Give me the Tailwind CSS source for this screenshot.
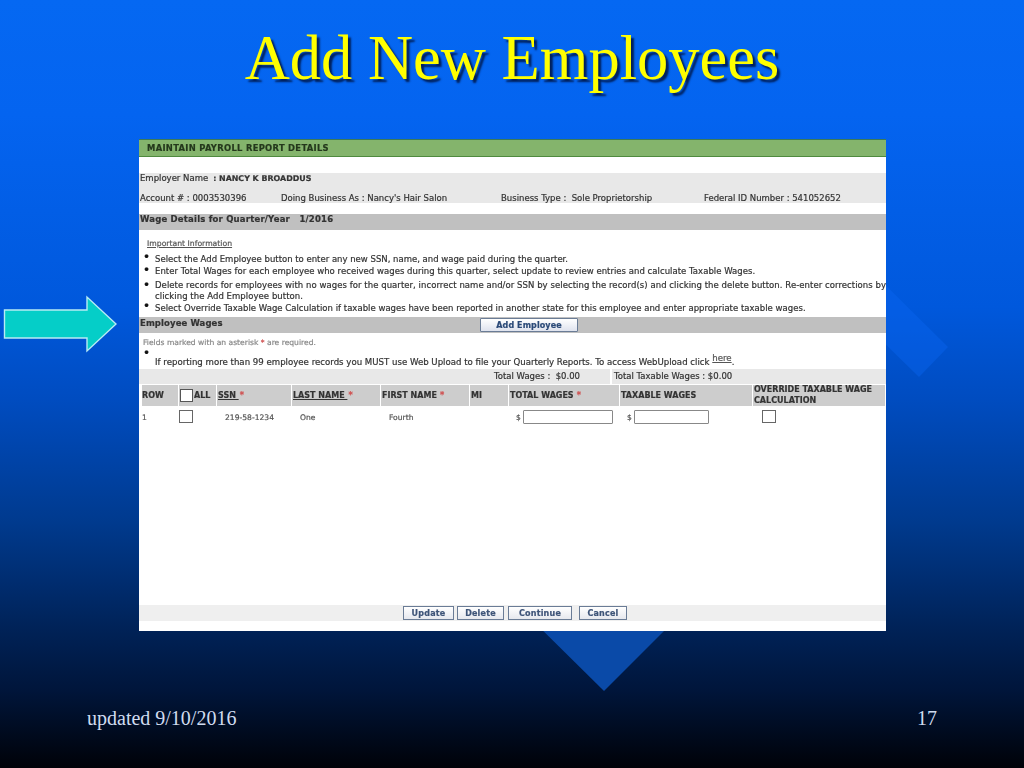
<!DOCTYPE html>
<html lang="en">
<head>
<meta charset="utf-8">
<title>Add New Employees</title>
<script src="https://cdn.jsdelivr.net/npm/@tailwindcss/browser@4"></script>
</head>
<body class="m-0">
<div class="relative w-[1024px] h-[768px] overflow-hidden bg-[linear-gradient(to_bottom,#0568f2_0%,#0464f0_15%,#0058dc_40%,#004cc0_52%,#003a8e_68%,#002257_82%,#00153a_90%,#000208_100%)]">
  <!-- background diamonds -->
  <svg class="absolute inset-0" width="1024" height="768" viewBox="0 0 1024 768">
    <polygon points="860,260 948,347 919,377 830,290" fill="#0a66f2" opacity="0.4"/>
    <polygon points="520,608 604,691 687,608" fill="#0a4aa8"/>
  </svg>

  <h1 class="absolute left-0 w-full top-[22px] text-center font-['Liberation_Serif',serif] text-[62.5px] leading-[72px] text-[#ffff00] [text-shadow:3px_3px_2px_#00205c]">Add New Employees</h1>

  <!-- arrow -->
  <svg class="absolute left-[3px] top-[295px]" width="114" height="58" viewBox="0 0 114 58">
    <polygon points="1.5,15 84,15 84,2 113,29 84,56 84,43 1.5,43" fill="#05cec8" stroke="#b8ecf4" stroke-width="1.4"/>
  </svg>

  <!-- screenshot of the payroll page -->
  <div class="absolute left-[139px] top-[139px] w-[747px] h-[492px] bg-white flex flex-col font-['DejaVu_Sans',sans-serif] text-[8.5px] text-[#333] [-webkit-text-stroke:0.2px] overflow-hidden blur-[0.3px]">
    <div class="h-[18px] shrink-0 bg-[#84b46c] border-t border-t-[#3d7a55] border-b border-b-[#4f8a3f] pl-[8px] flex items-center font-bold text-[8.4px] tracking-[0.3px] text-[#24381c]">MAINTAIN PAYROLL REPORT DETAILS</div>
    <div class="h-[16px] shrink-0"></div>
    <div class="h-[30px] shrink-0 bg-[#e8e8e8] flex flex-col">
      <div class="h-[11px] flex items-center gap-[5px] pl-[1px] whitespace-pre"><span>Employer Name</span><span class="font-bold text-[7.9px]">: NANCY K BROADDUS</span></div>
      <div class="relative mt-[9px] h-[11px] flex items-center whitespace-pre pl-[1px]">
        <span class="w-[141px]">Account # : 0003530396</span>
        <span class="w-[220px]">Doing Business As : Nancy's Hair Salon</span>
        <span class="w-[203px]">Business Type :  Sole Proprietorship</span>
        <span>Federal ID Number : 541052652</span>
      </div>
    </div>
    <div class="h-[11px] shrink-0"></div>
    <div class="h-[16px] shrink-0 bg-[#c0c0c0] pl-[1px] flex items-center font-bold tracking-[0.2px] whitespace-pre"><span class="-mt-[6px]">Wage Details for Quarter/Year   1/2016</span></div>

    <div class="h-[87px] shrink-0 relative whitespace-nowrap">
      <div class="pl-[8px] pt-[8px] leading-[11px] text-[7.7px] text-[#555]"><span class="underline">Important Information</span></div>
      <ul class="mt-[3px] flex flex-col pl-[4px]">
        <li class="flex h-[13px] gap-[8px]"><span class="text-[#111] text-[12px] leading-[10px] w-[4px]">•</span><span class="leading-[11px] mt-[2px]">Select the Add Employee button to enter any new SSN, name, and wage paid during the quarter.</span></li>
        <li class="flex h-[13px] gap-[8px]"><span class="text-[#111] text-[12px] leading-[10px] w-[4px]">•</span><span class="leading-[11px] mt-[1px] tracking-[0.03px]">Enter Total Wages for each employee who received wages during this quarter, select update to review entries and calculate Taxable Wages.</span></li>
        <li class="flex h-[23px] gap-[8px]"><span class="text-[#111] text-[12px] leading-[10px] mt-[2px] w-[4px]">•</span><span class="leading-[10.5px] mt-[2px] tracking-[0.055px]">Delete records for employees with no wages for the quarter, incorrect name and/or SSN by selecting the record(s) and clicking the delete button. Re-enter corrections by<br>clicking the Add Employee button.</span></li>
        <li class="flex h-[13px] gap-[8px]"><span class="text-[#111] text-[12px] leading-[10px] w-[4px]">•</span><span class="leading-[11px] mt-[2px] tracking-[0.02px]">Select Override Taxable Wage Calculation if taxable wages have been reported in another state for this employee and enter appropriate taxable wages.</span></li>
      </ul>
    </div>

    <div class="h-[16px] shrink-0 bg-[#c0c0c0] relative flex items-center pl-[1px] font-bold tracking-[0.1px]">
      <span class="-mt-[3px]">Employee Wages</span>
      <button class="absolute left-[341px] top-[1px] w-[98px] h-[14px] pt-[1px] bg-gradient-to-b from-white to-[#dfe3ee] border border-[#6a7c96] rounded-[1px] text-[#2b4a78] font-bold text-[8px] tracking-[0.1px] leading-none">Add Employee</button>
    </div>

    <div class="h-[36px] shrink-0 relative">
      <div class="pl-[4px] pt-[4px] leading-[11px] text-[#888] text-[7.6px]">Fields marked with an asterisk <span class="text-[#d05050]">*</span> are required.</div>
      <div class="absolute left-[4px] top-[15px] text-[#111] text-[12px] leading-[10px]">•</div>
      <div class="absolute left-[16px] top-[24px] text-[8.6px] leading-[11px] whitespace-nowrap">If reporting more than 99 employee records you MUST use Web Upload to file your Quarterly Reports. To access WebUpload click <span class="relative -top-[4px] underline text-[#555]">here</span>.</div>
    </div>

    <div class="h-[15px] shrink-0 bg-[#e8e8e8] flex items-center whitespace-pre relative">
      <span class="ml-[355px] w-[116px]">Total Wages :  $0.00</span>
      <span class="w-[2px] h-full bg-white"></span>
      <span class="ml-[2px]">Total Taxable Wages : $0.00</span>
    </div>

    <div class="h-[1px] shrink-0"></div>
    <div class="h-[21px] shrink-0 flex gap-[1px] pl-[3px] text-[#333] font-bold text-[8px] bg-white">
      <div class="w-[36px] bg-[#cdcdcd] flex items-center pt-[1px]">ROW</div>
      <div class="w-[37px] bg-[#cdcdcd] flex items-center pl-[1px]"><span class="w-[13px] h-[13px] border border-[#555] bg-white mr-[1px] shrink-0"></span><span class="pt-[1px]">ALL</span></div>
      <div class="w-[74px] bg-[#cdcdcd] flex items-center pl-[1px] pt-[1px] whitespace-pre"><span class="underline">SSN </span><span class="text-[#d05050] ml-[1px]">*</span></div>
      <div class="w-[88px] bg-[#cdcdcd] flex items-center pl-[1px] pt-[1px] whitespace-pre"><span class="underline">LAST NAME </span><span class="text-[#d05050] ml-[1px]">*</span></div>
      <div class="w-[88px] bg-[#cdcdcd] flex items-center pl-[1px] pt-[1px]">FIRST NAME <span class="text-[#d05050] ml-[3px]">*</span></div>
      <div class="w-[38px] bg-[#cdcdcd] flex items-center pl-[1px] pt-[1px]">MI</div>
      <div class="w-[110px] bg-[#cdcdcd] flex items-center pl-[1px] pt-[1px]">TOTAL WAGES <span class="text-[#d05050] ml-[3px]">*</span></div>
      <div class="w-[132px] bg-[#cdcdcd] flex items-center pl-[1px] pt-[1px]">TAXABLE WAGES</div>
      <div class="w-[132px] bg-[#cdcdcd] flex items-center pl-[1px] leading-[10.5px]">OVERRIDE TAXABLE WAGE<br>CALCULATION</div>
    </div>

    <div class="h-[22px] shrink-0 relative text-[7.6px] text-[#555]">
      <span class="absolute left-[3px] top-[6px] leading-[11px]">1</span>
      <span class="absolute left-[40px] top-[4px] w-[14px] h-[13px] border border-[#666]"></span>
      <span class="absolute left-[86px] top-[6px] leading-[11px]">219-58-1234</span>
      <span class="absolute left-[161px] top-[6px] leading-[11px]">One</span>
      <span class="absolute left-[250px] top-[6px] leading-[11px]">Fourth</span>
      <span class="absolute left-[377px] top-[6px] leading-[11px]">$</span>
      <span class="absolute left-[384px] top-[4px] w-[90px] h-[14px] border border-[#888] rounded-[1px]"></span>
      <span class="absolute left-[488px] top-[6px] leading-[11px]">$</span>
      <span class="absolute left-[495px] top-[4px] w-[75px] h-[14px] border border-[#888] rounded-[1px]"></span>
      <span class="absolute left-[623px] top-[4px] w-[14px] h-[13px] border border-[#666]"></span>
    </div>

    <div class="flex-1"></div>

    <div class="h-[16px] shrink-0 bg-[#efefef] flex items-center pl-[264px] font-bold text-[8px] tracking-[0.2px] text-[#3e5478]">
      <button class="w-[51px] h-[14px] pt-[1px] bg-gradient-to-b from-white to-[#e6e8ee] border border-[#6a7c96] leading-none">Update</button>
      <button class="ml-[3px] w-[47px] h-[14px] pt-[1px] bg-gradient-to-b from-white to-[#e6e8ee] border border-[#6a7c96] leading-none">Delete</button>
      <button class="ml-[4px] w-[64px] h-[14px] pt-[1px] bg-gradient-to-b from-white to-[#e6e8ee] border border-[#6a7c96] leading-none">Continue</button>
      <button class="ml-[7px] w-[48px] h-[14px] pt-[1px] bg-gradient-to-b from-white to-[#e6e8ee] border border-[#6a7c96] leading-none">Cancel</button>
    </div>
    <div class="h-[10px] shrink-0"></div>
  </div>

  <div class="absolute left-[87px] top-[707px] font-['Liberation_Serif',serif] text-[20px] leading-[22px] text-[#d0dcf0]">updated 9/10/2016</div>
  <div class="absolute left-[917px] top-[707px] font-['Liberation_Serif',serif] text-[20px] leading-[22px] text-[#d0dcf0]">17</div>
</div>
</body>
</html>
